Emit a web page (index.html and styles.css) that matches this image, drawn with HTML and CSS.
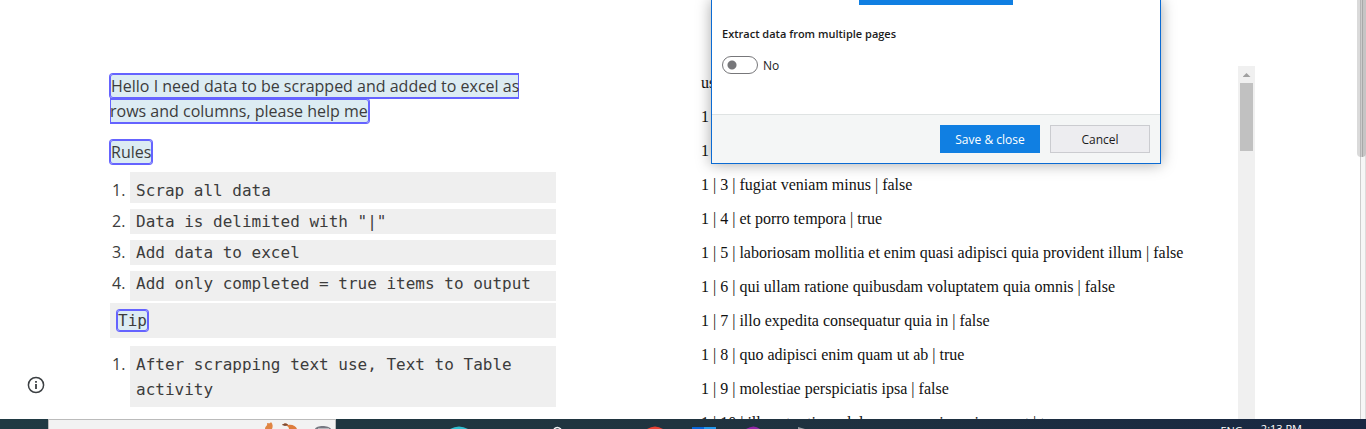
FILE: index.html
```html
<!DOCTYPE html>
<html lang="en">
<head>
<meta charset="utf-8">
<title>Scrap data</title>
<link rel="stylesheet" href="styles.css">
</head>
<body>
<main class="page">
  <article class="notes">
    <p class="intro"><mark class="mark">Hello I need data to be scrapped and added to excel as rows and columns, please help me</mark></p>
    <p class="intro"><mark class="mark">Rules</mark></p>
    <ol class="rules">
      <li><code>Scrap all data</code></li>
      <li><code>Data is delimited with "|"</code></li>
      <li><code>Add data to excel</code></li>
      <li><code>Add only completed = true items to output</code></li>
    </ol>
    <p class="tip"><mark class="mark">Tip</mark></p>
    <ol class="rules">
      <li><code>After scrapping text use, Text to Table activity</code></li>
    </ol>
  </article>
  <section class="data">
    <div class="rows">
      <p>userId | id | title | completed</p>
      <p>1 | 1 | delectus aut autem | false</p>
      <p>1 | 2 | quis ut nam facilis | false</p>
      <p>1 | 3 | fugiat veniam minus | false</p>
      <p>1 | 4 | et porro tempora | true</p>
      <p>1 | 5 | laboriosam mollitia et enim quasi adipisci quia provident illum | false</p>
      <p>1 | 6 | qui ullam ratione quibusdam voluptatem quia omnis | false</p>
      <p>1 | 7 | illo expedita consequatur quia in | false</p>
      <p>1 | 8 | quo adipisci enim quam ut ab | true</p>
      <p>1 | 9 | molestiae perspiciatis ipsa | false</p>
      <p>1 | 10 | illo est ratione doloremque quia maiores aut | true</p>
    </div>
    <div class="scroll"><span class="arrow"></span><span class="thumb"></span></div>
  </section>
  <div class="page-scroll"><span class="page-thumb"></span></div>
  <button class="info" aria-label="Information">
    <svg width="18" height="18" viewBox="0 0 18 18"><circle cx="9" cy="9" r="7.6" fill="none" stroke="#3c4043" stroke-width="1.5"/><path d="M8.1 8h1.8v5H8.1zM8.1 5h1.8v1.8H8.1z" fill="#3c4043"/></svg>
  </button>
</main>
<section class="dialog" role="dialog" aria-label="Data extraction">
  <div class="dialog-body">
    <div class="accent"></div>
    <h2>Extract data from multiple pages</h2>
    <label class="toggle"><input type="checkbox"><span>No</span></label>
  </div>
  <footer class="dialog-foot">
    <button class="btn primary">Save &amp; close</button>
    <button class="btn">Cancel</button>
  </footer>
</section>
<footer class="taskbar">
  <div class="search">
    <svg width="70" height="9" viewBox="0 0 70 9"><path d="M0 9c0-3 3-3 2-6 2 0 3 1 4-1 2 2 2 5 1 7z" fill="#e08543"/><path d="M17 5c2-2 5-2 6 0 4-1 8 1 9 4H24c0-2-2-4-7-4z" fill="#dd7c3c"/><path d="M17 5c2-2 5-2 6 0l-3 1z" fill="#7d4b34"/><path d="M50 9c1-4 14-4 16 0z" fill="#777982"/><path d="M53 8h11v1H53z" fill="#b5b6bb"/></svg>
  </div>
  <svg class="apps" width="380" height="10" viewBox="0 0 380 10"><path d="M14 10q9-5 18 0z" fill="#31c0d2"/><path d="M118 10q3-3 7 0" fill="none" stroke="#f1f4f5" stroke-width="1.5"/><path d="M211 10q8-5 16 0z" fill="#ea4335"/><path d="M256 8h12v2h-12z" fill="#0866d8"/><path d="M268 8h12v2h-12z" fill="#2499ed"/><path d="M310 10q8-5 14 0z" fill="#9026a5"/><path d="M362 8l7 2h-7z" fill="#99a0a4"/></svg>
  <span class="lang">ENG</span>
  <span class="clock">2:13 PM</span>
</footer>
</body>
</html>
```
FILE: styles.css
```css
* { box-sizing: border-box; }
body {
  margin: 0;
  height: 100vh;
  display: flex;
  flex-direction: column;
  overflow: hidden;
  background: #fff;
  position: relative;
}
p, ol, h2 { margin: 0; padding: 0; }

.page {
  flex: 1;
  min-height: 0;
  overflow: hidden;
  position: relative;
  display: grid;
  grid-template-columns: minmax(0, 446fr) minmax(0, 801fr) 9px;
  padding-left: 110px;
}
.notes {
  padding-top: 74px;
  font: 16px/25px "Open Sans", sans-serif;
  color: #3c3c3c;
}
.intro + .intro { margin-top: 16px; }
.mark {
  background: #dcecf3;
  color: inherit;
  border-radius: 3px;
  box-shadow: inset 0 0 0 1px #6563ff, 0 0 0 1px #6563ff;
  padding: 1px;
}
.rules {
  display: flex;
  flex-direction: column;
  gap: 6px;
  margin-top: 7px;
  list-style: none;
  counter-reset: rule;
}
.rules li {
  counter-increment: rule;
  display: flex;
}
.rules li::before {
  content: counter(rule) ".";
  width: 18px;
  padding-left: 2px;
}
.rules code {
  flex: 1;
  background: #efefef;
  padding: 0 6px;
}
.rules code,
.tip { font: 16px/25px "DejaVu Sans Mono", monospace; }
.rules li:first-child::before,
.rules li:first-child code { padding-top: 6px; }
.rules li:last-child code { padding-bottom: 5px; }
.tip {
  margin: 2px 0 8px;
  background: #efefef;
  padding: 5px 7px;
}

.data {
  display: flex;
  margin: 66px 102px 0 0;
  padding-left: 145px;
}
.rows {
  flex: 1;
  padding-top: 8px;
  display: flex;
  flex-direction: column;
  gap: 16px;
  font: 16px/18px "Liberation Serif", serif;
  color: #111;
  white-space: nowrap;
}
.scroll {
  width: 17px;
  background: #f0f0f0;
  padding: 7px 2px;
}
.arrow {
  display: block;
  width: 8px;
  height: 4px;
  margin: 0 auto 6px;
  background: #a0a0a0;
  clip-path: polygon(50% 0, 100% 100%, 0 100%);
}
.thumb {
  display: block;
  height: 68px;
  background: #c1c1c1;
}
.page-scroll {
  background: linear-gradient(90deg, #fff 3px, #ccc 3px, #ccc 4px, #f6f6f6 4px, #f6f6f6 8px, #ddd 8px);
}
.page-thumb {
  display: block;
  height: 157px;
  border-radius: 0 0 4px 4px;
  background: linear-gradient(90deg, #dadada 3px, #b5b5b5 3px, #b5b5b5 4px, #ccc 4px, #ccc 5px, #a8a8a8 5px, #a8a8a8 6px, #c5c5c5 6px);
}
.info {
  position: absolute;
  left: 27px;
  top: 376px;
  padding: 0;
  border: 0;
  background: none;
  line-height: 0;
}

.dialog {
  position: absolute;
  left: 711px;
  top: 0;
  width: 450px;
  border: 1px solid #0b6bd3;
  border-top: 0;
  background: #fff;
  box-shadow: 0 0 14px rgba(0, 0, 0, .35);
  font: 12px/16px "Open Sans", sans-serif;
  color: #1b1b1b;
}
.dialog-body {
  height: 114px;
  padding: 0 10px;
}
.accent {
  width: 154px;
  height: 5px;
  margin: 0 auto 21px;
  background: #107fe2;
}
.dialog h2 { font-size: 11px; line-height: 16px; font-weight: 600; }
.toggle {
  display: flex;
  align-items: center;
  gap: 5px;
  margin-top: 14px;
}
.toggle span { padding-top: 2px; }
.toggle input {
  appearance: none;
  margin: 0;
  width: 36px;
  height: 18px;
  border: 1px solid #77777a;
  border-radius: 9px;
  background: radial-gradient(circle at 9px 8px, #77777a 4px, #fff 5px);
}
.dialog-foot {
  display: flex;
  justify-content: flex-end;
  gap: 10px;
  padding: 10px;
  border-top: 1px solid #dfe3e3;
  background: #f4f6f6;
}
.btn {
  width: 100px;
  height: 28px;
  padding: 2px 0 0;
  border: 1px solid #cbccd0;
  background: #ededf0;
  font: inherit;
  color: #1b1b1b;
}
.primary {
  border-color: #107fe2;
  background: #107fe2;
  color: #fff;
}

.taskbar {
  height: 10px;
  display: flex;
  overflow: hidden;
  padding: 0 64px 0 48px;
  background: linear-gradient(90deg, #203a43, #20343f 50%, #192742);
  font: 11px/16px "Open Sans", sans-serif;
  color: #fff;
}
.search {
  width: 288px;
  display: flex;
  justify-content: flex-end;
  border: 1px solid #bbb;
  border-bottom: 0;
  background: #f2f2f2;
}
.apps { margin: 0 auto 0 100px; }
.lang { padding-top: 4px; }
.clock { margin-left: 18px; padding-top: 2px; }
```
